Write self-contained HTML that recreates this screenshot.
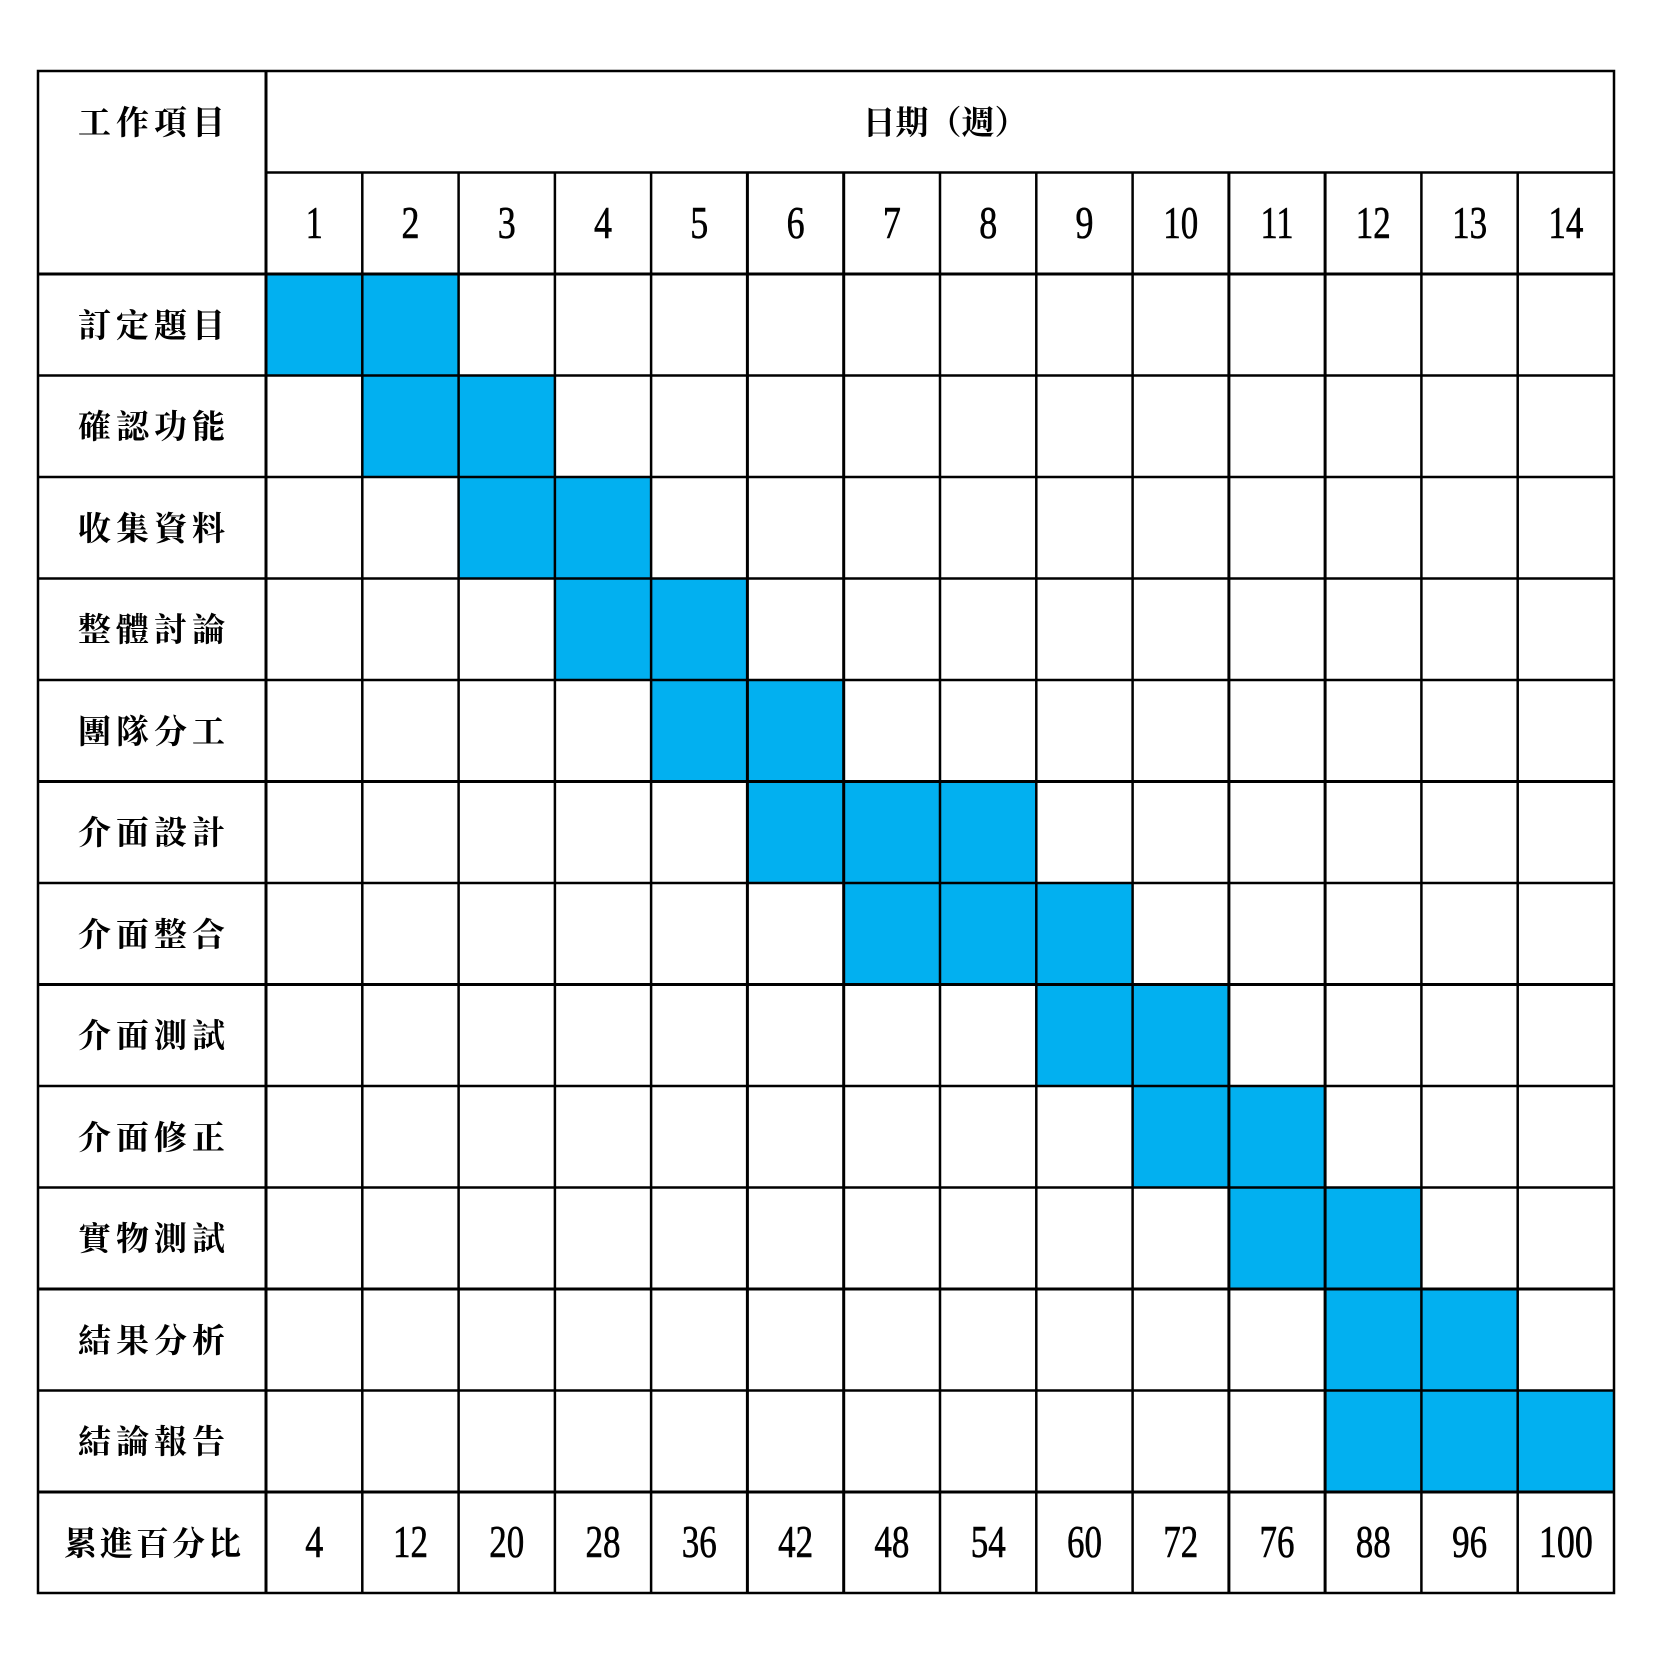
<!DOCTYPE html>
<html><head><meta charset="utf-8"><style>
html,body{margin:0;padding:0;background:#fff;width:1653px;height:1653px;overflow:hidden}
svg{display:block}
.c{font-family:"Liberation Serif","Noto Serif CJK SC","Noto Sans CJK TC",serif;font-size:33px;font-weight:bold;letter-spacing:5px}
.n{font-family:"Liberation Serif",serif;font-size:45px;stroke:#000;stroke-width:0.6}
</style></head><body>
<svg width="1653" height="1653" viewBox="0 0 1653 1653" xmlns="http://www.w3.org/2000/svg">
<g fill="#02b0f0">
<rect x="266" y="274" width="192.6" height="101.5"/>
<rect x="362.3" y="375.5" width="192.6" height="101.5"/>
<rect x="458.6" y="477" width="192.5" height="101.5"/>
<rect x="554.9" y="578.5" width="192.5" height="101.5"/>
<rect x="651.1" y="680" width="192.6" height="101.5"/>
<rect x="747.4" y="781.5" width="288.9" height="101.5"/>
<rect x="843.7" y="883" width="288.9" height="101.5"/>
<rect x="1036.3" y="984.5" width="192.6" height="101.5"/>
<rect x="1132.6" y="1086" width="192.5" height="101.5"/>
<rect x="1228.9" y="1187.5" width="192.5" height="101.5"/>
<rect x="1325.1" y="1289" width="192.6" height="101.5"/>
<rect x="1325.1" y="1390.5" width="288.9" height="101.5"/>
</g>
<g stroke="#000" stroke-width="2.5" fill="none">
<rect x="38" y="71" width="1576" height="1522"/>
<line x1="266" y1="71" x2="266" y2="1593" stroke-width="3"/>
<line x1="266" y1="172.5" x2="1614" y2="172.5"/>
<line x1="38" y1="274" x2="1614" y2="274" stroke-width="3"/>
<line x1="38" y1="375.5" x2="1614" y2="375.5"/>
<line x1="38" y1="477" x2="1614" y2="477"/>
<line x1="38" y1="578.5" x2="1614" y2="578.5"/>
<line x1="38" y1="680" x2="1614" y2="680"/>
<line x1="38" y1="781.5" x2="1614" y2="781.5" stroke-width="3"/>
<line x1="38" y1="883" x2="1614" y2="883"/>
<line x1="38" y1="984.5" x2="1614" y2="984.5" stroke-width="3"/>
<line x1="38" y1="1086" x2="1614" y2="1086"/>
<line x1="38" y1="1187.5" x2="1614" y2="1187.5"/>
<line x1="38" y1="1289" x2="1614" y2="1289" stroke-width="3"/>
<line x1="38" y1="1390.5" x2="1614" y2="1390.5"/>
<line x1="38" y1="1492" x2="1614" y2="1492" stroke-width="3"/>
<line x1="362.3" y1="172.5" x2="362.3" y2="1593"/>
<line x1="458.6" y1="172.5" x2="458.6" y2="1593"/>
<line x1="554.9" y1="172.5" x2="554.9" y2="1593"/>
<line x1="651.1" y1="172.5" x2="651.1" y2="1593"/>
<line x1="747.4" y1="172.5" x2="747.4" y2="1593" stroke-width="3"/>
<line x1="843.7" y1="172.5" x2="843.7" y2="1593" stroke-width="3"/>
<line x1="940" y1="172.5" x2="940" y2="1593"/>
<line x1="1036.3" y1="172.5" x2="1036.3" y2="1593"/>
<line x1="1132.6" y1="172.5" x2="1132.6" y2="1593"/>
<line x1="1228.9" y1="172.5" x2="1228.9" y2="1593" stroke-width="3"/>
<line x1="1325.1" y1="172.5" x2="1325.1" y2="1593" stroke-width="3"/>
<line x1="1421.4" y1="172.5" x2="1421.4" y2="1593"/>
<line x1="1517.7" y1="172.5" x2="1517.7" y2="1593"/>
</g>
<g class="c" text-anchor="middle" dominant-baseline="central">
<text x="154" y="124">工作項目</text>
<text x="945" y="124" letter-spacing="0">日期（週）</text>
<text x="154" y="327">訂定題目</text>
<text x="154" y="428">確認功能</text>
<text x="154" y="530">收集資料</text>
<text x="154" y="631">整體討論</text>
<text x="154" y="733">團隊分工</text>
<text x="154" y="834">介面設計</text>
<text x="154" y="936">介面整合</text>
<text x="154" y="1037">介面測試</text>
<text x="154" y="1139">介面修正</text>
<text x="154" y="1240">實物測試</text>
<text x="154" y="1342">結果分析</text>
<text x="154" y="1443">結論報告</text>
<text x="154" y="1545" letter-spacing="3">累進百分比</text>
</g>
<g class="n" text-anchor="middle">
<text x="314.2" y="238" textLength="17" lengthAdjust="spacingAndGlyphs">1</text>
<text x="410.5" y="238" textLength="18" lengthAdjust="spacingAndGlyphs">2</text>
<text x="506.8" y="238" textLength="18" lengthAdjust="spacingAndGlyphs">3</text>
<text x="603" y="238" textLength="18" lengthAdjust="spacingAndGlyphs">4</text>
<text x="699.3" y="238" textLength="18" lengthAdjust="spacingAndGlyphs">5</text>
<text x="795.6" y="238" textLength="18" lengthAdjust="spacingAndGlyphs">6</text>
<text x="891.9" y="238" textLength="18" lengthAdjust="spacingAndGlyphs">7</text>
<text x="988.2" y="238" textLength="18" lengthAdjust="spacingAndGlyphs">8</text>
<text x="1084.5" y="238" textLength="18" lengthAdjust="spacingAndGlyphs">9</text>
<text x="1180.8" y="238" textLength="35" lengthAdjust="spacingAndGlyphs">10</text>
<text x="1277" y="238" textLength="33" lengthAdjust="spacingAndGlyphs">11</text>
<text x="1373.3" y="238" textLength="35" lengthAdjust="spacingAndGlyphs">12</text>
<text x="1469.6" y="238" textLength="35" lengthAdjust="spacingAndGlyphs">13</text>
<text x="1565.9" y="238" textLength="35" lengthAdjust="spacingAndGlyphs">14</text>

<text x="314.2" y="1557" textLength="18" lengthAdjust="spacingAndGlyphs">4</text>
<text x="410.5" y="1557" textLength="35" lengthAdjust="spacingAndGlyphs">12</text>
<text x="506.8" y="1557" textLength="35" lengthAdjust="spacingAndGlyphs">20</text>
<text x="603" y="1557" textLength="35" lengthAdjust="spacingAndGlyphs">28</text>
<text x="699.3" y="1557" textLength="35" lengthAdjust="spacingAndGlyphs">36</text>
<text x="795.6" y="1557" textLength="35" lengthAdjust="spacingAndGlyphs">42</text>
<text x="891.9" y="1557" textLength="35" lengthAdjust="spacingAndGlyphs">48</text>
<text x="988.2" y="1557" textLength="35" lengthAdjust="spacingAndGlyphs">54</text>
<text x="1084.5" y="1557" textLength="35" lengthAdjust="spacingAndGlyphs">60</text>
<text x="1180.8" y="1557" textLength="35" lengthAdjust="spacingAndGlyphs">72</text>
<text x="1277" y="1557" textLength="35" lengthAdjust="spacingAndGlyphs">76</text>
<text x="1373.3" y="1557" textLength="35" lengthAdjust="spacingAndGlyphs">88</text>
<text x="1469.6" y="1557" textLength="35" lengthAdjust="spacingAndGlyphs">96</text>
<text x="1565.9" y="1557" textLength="54" lengthAdjust="spacingAndGlyphs">100</text>
</g>
</svg>
</body></html>
